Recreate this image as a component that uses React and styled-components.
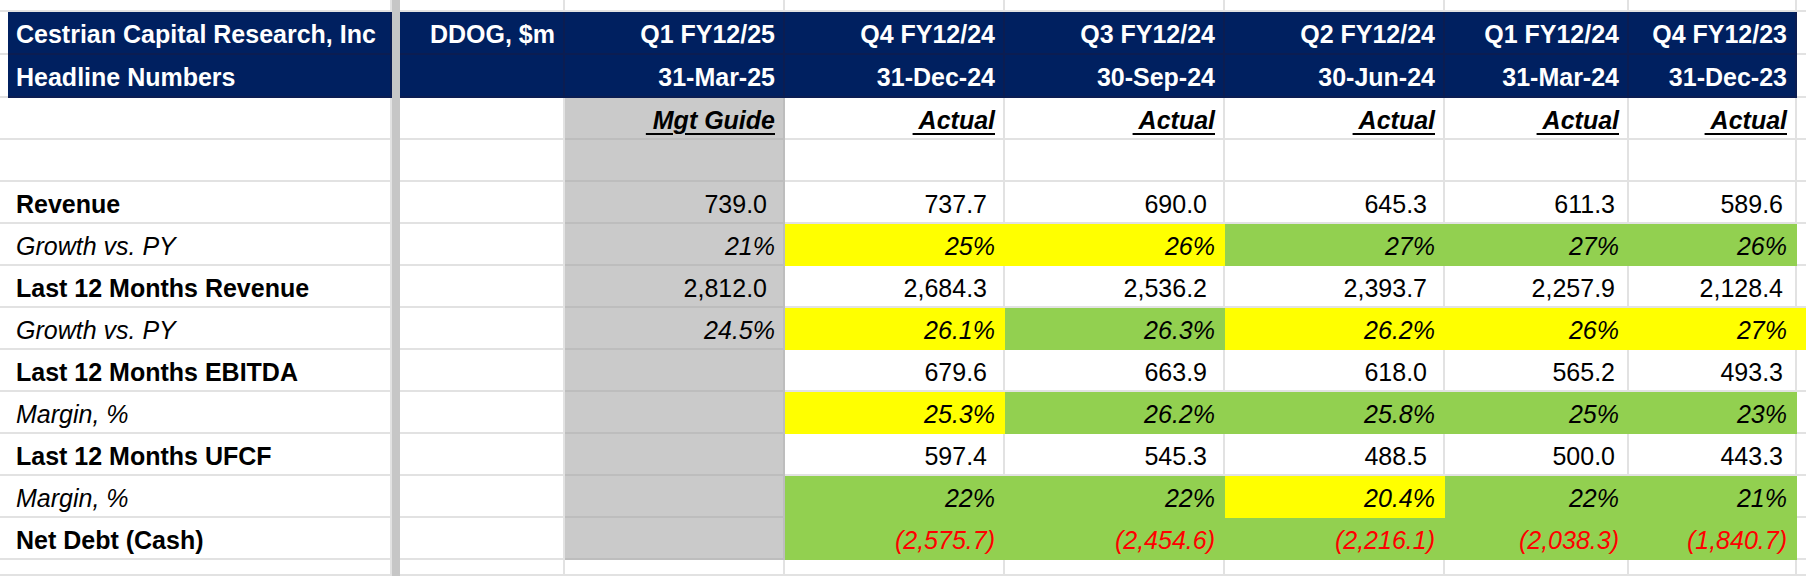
import React from 'react';
import styled, { createGlobalStyle } from 'styled-components';

const GlobalStyle = createGlobalStyle`
  * { box-sizing: border-box; }
  html, body { margin: 0; padding: 0; background: #fff; }
  body { font-family: "Liberation Sans", Arial, sans-serif; }
`;

const NAVY = '#002060';
const YELLOW = '#ffff00';
const GREEN = '#92d050';
const GRAY = '#cacaca';
const GRID = '#e2e2e2';

const Sheet = styled.div`
  display: grid;
  grid-template-columns: 8px 384px 8px 165px 220px 220px 220px 220px 184px 168px 1fr;
  grid-template-rows: 12px 43px 43px repeat(11, 42px) 1fr;
  width: 1806px;
  height: 576px;
  overflow: hidden;
  font-size: 25px;
  line-height: 28px;
  color: #000;
`;

const FreezeBar = styled.div`
  grid-column: 3;
  grid-row: 1 / -1;
  background: #c6c6c6;
`;

const Cell = styled.div`
  display: flex;
  align-items: flex-end;
  justify-content: ${p => (p.$right ? 'flex-end' : 'flex-start')};
  padding: 0 ${p => p.$pr ?? 8}px 4px 8px;
  background: ${p => p.$fill || '#fff'};
  border-right: 2px solid ${p => p.$line || GRID};
  border-bottom: 2px solid ${p => p.$line || GRID};
  font-weight: ${p => (p.$bold ? 700 : 400)};
  font-style: ${p => (p.$italic ? 'italic' : 'normal')};
  color: ${p => p.$color || '#000'};
  white-space: nowrap;
  min-width: 0;
`;

const HeadCell = styled(Cell).attrs({ $fill: NAVY, $line: '#0b1d52', $bold: true, $color: '#fff' })`
  padding-bottom: 5px;
`;

const TagText = styled.span`
  font-weight: 700;
  font-style: italic;
  text-decoration: underline;
  text-decoration-thickness: 2px;
  text-underline-offset: 4px;
  white-space: pre;
`;

const fills = { Y: YELLOW, G: GREEN };

const periods = [
  { q: 'Q1 FY12/25', d: '31-Mar-25', tag: ' Mgt Guide' },
  { q: 'Q4 FY12/24', d: '31-Dec-24', tag: ' Actual' },
  { q: 'Q3 FY12/24', d: '30-Sep-24', tag: ' Actual' },
  { q: 'Q2 FY12/24', d: '30-Jun-24', tag: ' Actual' },
  { q: 'Q1 FY12/24', d: '31-Mar-24', tag: ' Actual' },
  { q: 'Q4 FY12/23', d: '31-Dec-23', tag: ' Actual' },
];

// kind: n = number, p = percent, neg = negative (red)
const rows = [
  { label: 'Revenue', bold: true, kind: 'n', vals: ['739.0', '737.7', '690.0', '645.3', '611.3', '589.6'] },
  { label: 'Growth vs. PY', italic: true, kind: 'p', vals: ['21%', '25%', '26%', '27%', '27%', '26%'], fill: ['', 'Y', 'Y', 'G', 'G', 'G'] },
  { label: 'Last 12 Months Revenue', bold: true, kind: 'n', vals: ['2,812.0', '2,684.3', '2,536.2', '2,393.7', '2,257.9', '2,128.4'] },
  { label: 'Growth vs. PY', italic: true, kind: 'p', vals: ['24.5%', '26.1%', '26.3%', '26.2%', '26%', '27%'], fill: ['', 'Y', 'G', 'Y', 'Y', 'Y'], tail: 'Y' },
  { label: 'Last 12 Months EBITDA', bold: true, kind: 'n', vals: ['', '679.6', '663.9', '618.0', '565.2', '493.3'] },
  { label: 'Margin, %', italic: true, kind: 'p', vals: ['', '25.3%', '26.2%', '25.8%', '25%', '23%'], fill: ['', 'Y', 'G', 'G', 'G', 'G'] },
  { label: 'Last 12 Months UFCF', bold: true, kind: 'n', vals: ['', '597.4', '545.3', '488.5', '500.0', '443.3'] },
  { label: 'Margin, %', italic: true, kind: 'p', vals: ['', '22%', '22%', '20.4%', '22%', '21%'], fill: ['', 'G', 'G', 'Y', 'G', 'G'] },
  { label: 'Net Debt (Cash)', bold: true, kind: 'neg', vals: ['', '(2,575.7)', '(2,454.6)', '(2,216.1)', '(2,038.3)', '(1,840.7)'], fill: ['', 'G', 'G', 'G', 'G', 'G'] },
];

const numPad = i => (i < 4 ? 16 : 12);

const ValueCell = ({ row, i }) => {
  const v = row.vals[i];
  const f = i === 0 ? GRAY : fills[row.fill?.[i]];
  const line = i === 0 ? '#bdbdbd' : f;
  return (
    <Cell
      $right
      $fill={f}
      $line={line}
      $italic={row.kind !== 'n'}
      $color={row.kind === 'neg' ? '#ff0000' : undefined}
      $pr={row.kind === 'n' ? numPad(i) : 8}
    >
      {v}
    </Cell>
  );
};

const BlankRow = ({ tag }) => (
  <>
    <Cell />
    <Cell />
    <Cell />
    {periods.map((p, i) => (
      <Cell key={i} $right $fill={i === 0 ? GRAY : undefined} $line={i === 0 ? '#bdbdbd' : undefined}>
        {tag ? <TagText>{p.tag}</TagText> : null}
      </Cell>
    ))}
    <Cell />
  </>
);

export default function App() {
  return (
    <>
      <GlobalStyle />
      <Sheet>
        <FreezeBar />

        {/* partial row above the header */}
        <Cell />
        <Cell />
        <Cell />
        {periods.map((p, i) => <Cell key={i} />)}
        <Cell />

        {/* header */}
        <Cell />
        <HeadCell>Cestrian Capital Research, Inc</HeadCell>
        <HeadCell $right>DDOG, $m</HeadCell>
        {periods.map((p, i) => <HeadCell key={i} $right>{p.q}</HeadCell>)}
        <Cell />

        <Cell />
        <HeadCell>Headline Numbers</HeadCell>
        <HeadCell />
        {periods.map((p, i) => <HeadCell key={i} $right>{p.d}</HeadCell>)}
        <Cell />

        <BlankRow tag />
        <BlankRow />

        {rows.map((r, ri) => (
          <React.Fragment key={ri}>
            <Cell />
            <Cell $bold={r.bold} $italic={r.italic}>{r.label}</Cell>
            <Cell />
            {periods.map((p, i) => <ValueCell key={i} row={r} i={i} />)}
            <Cell $fill={fills[r.tail]} $line={fills[r.tail]} />
          </React.Fragment>
        ))}

        <Cell />
        <Cell />
        <Cell />
        {periods.map((p, i) => <Cell key={i} />)}
        <Cell />
      </Sheet>
    </>
  );
}
